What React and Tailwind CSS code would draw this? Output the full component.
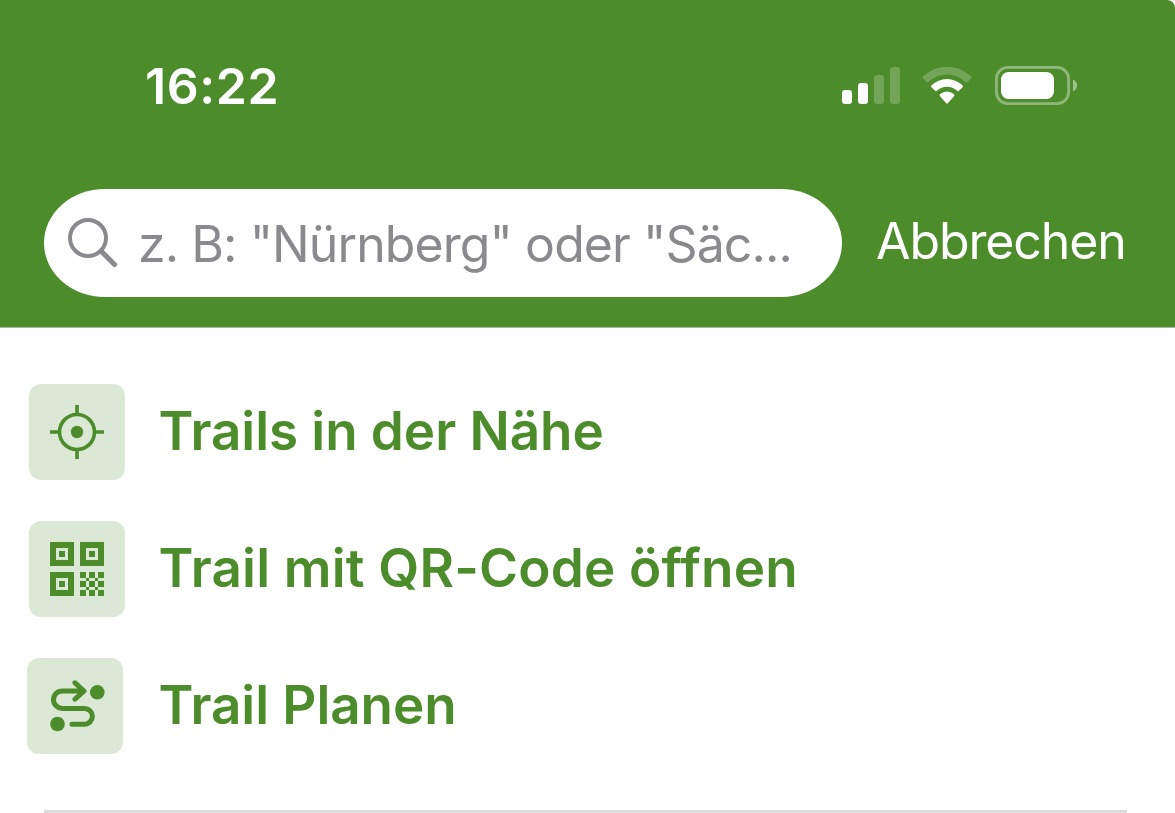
function SignalIcon() {
  return (
    <svg width="58" height="38" viewBox="0 0 58 38" fill="#fff">
      <rect x="0" y="23" width="10" height="14" rx="3.2" />
      <rect x="16" y="16" width="10" height="21" rx="3.2" />
      <rect x="32" y="8" width="10" height="29" rx="3.2" opacity="0.22" />
      <rect x="48" y="0" width="10" height="37" rx="3.2" opacity="0.22" />
    </svg>
  );
}

function WifiIcon() {
  return (
    <svg width="50" height="38" viewBox="0 0 50 38" fill="#fff">
      <path d="M1 9.500a34.500 34.500 0 0 1 48 0q1 1 0 2l-3.500 3.500q-1 .9-2 0a26.800 26.800 0 0 0-37 0q-1 .9-2 0L1 11.500q-1-1 0-2z" opacity="0.22" />
      <path d="M9.500 18.300a22.200 22.200 0 0 1 31 0q1 1 0 2L37 23.800q-1 .9-2 0a14.700 14.700 0 0 0-20 0q-1 .9-2 0l-3.500-3.500q-1-1 0-2z" />
      <path d="M18 27.200a10.400 10.400 0 0 1 14 0q1 1 0 2l-6 6.700q-1 1-2 0l-6-6.700q-1-1 0-2z" />
    </svg>
  );
}

function BatteryIcon() {
  return (
    <svg width="82" height="39" viewBox="0 0 82 39" fill="none">
      <rect x="1.400" y="1.400" width="72.200" height="36.200" rx="11.500" stroke="#fff" strokeOpacity="0.38" strokeWidth="2.800" />
      <rect x="6" y="6" width="53" height="27" rx="7.500" fill="#fff" />
      <path d="M78 13.500c2.600 1 4 3.400 4 6s-1.400 5-4 6z" fill="#fff" opacity="0.45" />
    </svg>
  );
}

function SearchIcon() {
  return (
    <svg className="shrink-0" width="50" height="50" viewBox="0 0 50 50" fill="none" stroke="#8a8a8e" strokeWidth="4">
      <circle cx="20" cy="20" r="18" />
      <path d="M33 33L46.500 46.500" strokeWidth="5" strokeLinecap="round" />
    </svg>
  );
}

function NearbyIcon() {
  return (
    <svg width="54" height="54" viewBox="0 0 54 54" fill="none" stroke="#4c8c2b" strokeWidth="3.600">
      <circle cx="27" cy="27" r="17.500" />
      <path d="M27 0v10M27 44v10M0 27h10M44 27h10" />
      <circle cx="27" cy="27" r="6.200" fill="#4c8c2b" stroke="none" />
    </svg>
  );
}

function QrIcon() {
  return (
    <svg width="54" height="54" viewBox="0 0 18 18" fill="#4c8c2b" fillRule="evenodd" shapeRendering="crispEdges">
      <path d="M0 0h8v8H0zM2 2v4h4V2zM3 3h2v2H3z" />
      <path d="M10 0h8v8h-8zM12 2v4h4V2zM13 3h2v2h-2z" />
      <path d="M0 10h8v8H0zM2 12v4h4v-4zM3 13h2v2H3z" />
      <path d="M10 10h2v2h-2zM13 10h2v2h-2zM16 10h2v2h-2zM12 12h1v1h-1zM15 12h1v1h-1zM10 13h2v2h-2zM13 13h2v2h-2zM16 13h2v2h-2zM12 15h1v1h-1zM15 15h1v1h-1zM10 16h2v2h-2zM13 16h2v2h-2zM16 16h2v2h-2z" />
    </svg>
  );
}

function RouteIcon() {
  return (
    <svg className="ml-[5px]" width="56" height="52" viewBox="0 0 56 52" fill="none" stroke="#4c8c2b" strokeWidth="5" strokeLinecap="round" strokeLinejoin="round">
      <path d="M33 11H12.200a8.700 8.700 0 0 0 0 17.400h22.300a7.900 7.900 0 0 1 0 15.800H22" />
      <path d="M25 2.800L34 11l-9 8.200" />
      <circle cx="47.300" cy="12.300" r="7.300" fill="#4c8c2b" stroke="none" />
      <circle cx="7.500" cy="44" r="7.300" fill="#4c8c2b" stroke="none" />
    </svg>
  );
}

const actions = [
  { label: 'Trails in der Nähe', icon: NearbyIcon, tile: '', text: 'tracking-[-0.05px]' },
  { label: 'Trail mit QR-Code öffnen', icon: QrIcon, tile: '', text: 'tracking-[0.2px]' },
  { label: 'Trail Planen', icon: RouteIcon, tile: '-ml-0.5 mr-0.5', text: 'tracking-[-0.05px]' },
];

export default function App() {
  return (
    <div className="flex h-[813px] w-[1175px] flex-col overflow-hidden bg-white font-['Inter',sans-serif]">
      <header className="h-[328px] shrink-0 rounded-tr-[8px] border-b border-[#a9b8a1] bg-[#4c8c2b]">
        <div className="flex h-[189px] items-start justify-between pr-[98px] pl-[145px]">
          <span className="pt-[56px] text-[50px] leading-[60px] font-semibold tracking-[0.6px] text-white">16:22</span>
          <div className="flex items-start pt-[66px]">
            <div className="mt-px mr-[22px]"><SignalIcon /></div>
            <div className="mt-px mr-[23px]"><WifiIcon /></div>
            <BatteryIcon />
          </div>
        </div>
        <div className="flex h-[108px] items-center pl-[44px]">
          <div className="flex h-[108px] w-[798px] shrink-0 items-center rounded-[61px/54px] bg-white pl-[24px]">
            <SearchIcon />
            <span className="mt-0.5 ml-[20px] whitespace-nowrap text-[50px] leading-[60px] tracking-[-0.92px] text-[#8a8a8e]">
              z. B: "Nürnberg" oder "Säc...
            </span>
          </div>
          <button className="-mt-1 ml-[34px] whitespace-nowrap text-[50px] leading-[60px] tracking-[-1.1px] text-white">Abbrechen</button>
        </div>
      </header>
      <main className="flex flex-1 flex-col pt-[56px]">
        <ul className="flex flex-col gap-[41px] pl-[29px]">
          {actions.map(({ label, icon: Icon, tile, text }) => (
            <li key={label} className="flex h-24 items-center">
              <div className={`flex size-24 items-center justify-center rounded-[12px] bg-[#dbe8d5] ${tile}`}>
                <Icon />
              </div>
              <span className={`-mt-0.5 ml-[33.5px] whitespace-nowrap text-[53px] leading-[60px] font-semibold text-[#4c8c2b] ${text}`}>
                {label}
              </span>
            </li>
          ))}
        </ul>
        <hr className="mx-[44px] mt-auto w-[1083px] border-0 border-t-[3px] border-[#dcdcdc]" />
      </main>
    </div>
  );
}
